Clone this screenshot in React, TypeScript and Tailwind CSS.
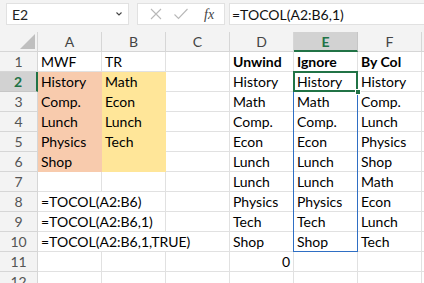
import React from "react";

type Cell = { t: string; bold?: boolean; right?: boolean; fill?: string; span?: number };

const F1 = "bg-[#f8cbad]";
const F2 = "bg-[#ffe699]";

const rows: (Cell | null)[][] = [
  [{ t: "MWF" }, { t: "TR" }, { t: "" }, { t: "Unwind", bold: true }, { t: "Ignore", bold: true }, { t: "By Col", bold: true }],
  [{ t: "History", fill: F1 }, { t: "Math", fill: F2 }, { t: "" }, { t: "History" }, { t: "History" }, { t: "History" }],
  [{ t: "Comp.", fill: F1 }, { t: "Econ", fill: F2 }, { t: "" }, { t: "Math" }, { t: "Math" }, { t: "Comp." }],
  [{ t: "Lunch", fill: F1 }, { t: "Lunch", fill: F2 }, { t: "" }, { t: "Comp." }, { t: "Comp." }, { t: "Lunch" }],
  [{ t: "Physics", fill: F1 }, { t: "Tech", fill: F2 }, { t: "" }, { t: "Econ" }, { t: "Econ" }, { t: "Physics" }],
  [{ t: "Shop", fill: F1 }, { t: "", fill: F2 }, { t: "" }, { t: "Lunch" }, { t: "Lunch" }, { t: "Shop" }],
  [{ t: "" }, { t: "" }, { t: "" }, { t: "Lunch" }, { t: "Lunch" }, { t: "Math" }],
  [{ t: "=TOCOL(A2:B6)", span: 2 }, null, { t: "" }, { t: "Physics" }, { t: "Physics" }, { t: "Econ" }],
  [{ t: "=TOCOL(A2:B6,1)", span: 2 }, null, { t: "" }, { t: "Tech" }, { t: "Tech" }, { t: "Lunch" }],
  [{ t: "=TOCOL(A2:B6,1,TRUE)", span: 3 }, null, null, { t: "Shop" }, { t: "Shop" }, { t: "Tech" }],
  [{ t: "" }, { t: "" }, { t: "" }, { t: "0", right: true }, { t: "" }, { t: "" }],
  [{ t: "" }, { t: "" }, { t: "" }, { t: "" }, { t: "" }, { t: "" }],
];

const cols = ["A", "B", "C", "D", "E", "F"];

export default function App() {
  return (
    <div
      className="w-[424px] h-[283px] overflow-hidden bg-white relative"
      style={{ fontFamily: "Lato, 'Noto Sans', sans-serif" }}
    >
      {/* Formula bar */}
      <div className="h-[32px] bg-[#f3f3f3] flex items-start pt-[3px] pl-[6px]">
        <div className="w-[123px] h-[22px] bg-white border border-[#e1e1e1] flex items-center justify-between pl-[5px] pr-[4px] text-[14px] text-[#222]">
          <span>E2</span>
          <svg width="8" height="6" viewBox="0 0 8 6" className="mr-[1px]">
            <path d="M1.5 1.5 L4 4 L6.5 1.5" stroke="#444" strokeWidth="1.1" fill="none" />
          </svg>
        </div>
        <div className="ml-[8px] w-[88px] h-[22px] bg-white border border-[#e1e1e1] flex items-center">
          <svg width="14" height="14" viewBox="0 0 14 14" className="ml-[11px]">
            <path d="M2 2 L12 12 M12 2 L2 12" stroke="#b8b8b8" strokeWidth="1.1" fill="none" />
          </svg>
          <svg width="16" height="14" viewBox="0 0 16 14" className="ml-[10px]">
            <path d="M1.5 7.5 L5.5 11.5 L14.5 2" stroke="#b8b8b8" strokeWidth="1.1" fill="none" />
          </svg>
          <span
            className="ml-[15px] text-[14px] italic text-[#444]"
            style={{ fontFamily: "'Liberation Serif', 'DejaVu Serif', serif" }}
          >
            fx
          </span>
        </div>
        <div className="ml-[4px] flex-1 h-[22px] bg-white border border-[#e1e1e1] border-r-0 flex items-center pl-[2px] text-[14px] text-[#111]">
          =TOCOL(A2:B6,1)
        </div>
      </div>

      {/* Grid */}
      <div
        className="grid"
        style={{ gridTemplateColumns: "38px repeat(6, 64px) 1fr", gridAutoRows: "20px" }}
      >
        {/* corner */}
        <div className="bg-[#f3f3f3] border-r border-b border-[#d6d6d6] relative">
          <svg width="15" height="15" viewBox="0 0 15 15" className="absolute right-[2px] bottom-[2px]">
            <path d="M15 0 L15 15 L0 15 Z" fill="#bfbfbf" />
          </svg>
        </div>
        {cols.map((c) =>
          c === "E" ? (
            <div
              key={c}
              className="bg-[#d2d2d2] border-r border-[#c6c6c6] border-b-2 border-b-[#217346] flex items-center justify-center text-[14px] font-bold text-[#217346]"
            >
              {c}
            </div>
          ) : (
            <div
              key={c}
              className="bg-[#f3f3f3] border-r border-b border-[#d6d6d6] flex items-center justify-center text-[14px] text-[#444]"
            >
              {c}
            </div>
          )
        )}
        <div className="bg-[#f3f3f3] border-b border-[#d6d6d6]" />

        {rows.map((r, ri) => (
          <React.Fragment key={ri}>
            {ri === 1 ? (
              <div className="bg-[#d2d2d2] border-b border-[#c6c6c6] border-r-2 border-r-[#217346] flex items-center justify-center text-[14px] font-bold text-[#217346]">
                {ri + 1}
              </div>
            ) : (
              <div className="bg-[#f3f3f3] border-r border-b border-[#d6d6d6] flex items-center justify-center text-[14px] text-[#555]">
                {ri + 1}
              </div>
            )}
            {r.map((cell, ci) => {
              if (!cell) return null;
              const span = cell.span ?? 1;
              const border = cell.fill
                ? `${cell.fill} border-r border-b ${cell.fill === F1 ? "border-[#f8cbad]" : "border-[#ffe699]"}`
                : "bg-white border-r border-b border-[#e1e1e1]";
              return (
                <div
                  key={ci}
                  className={`${border} flex items-end pb-[1px] px-[3px] text-[14px] leading-[17px] text-black whitespace-nowrap overflow-visible ${cell.bold ? "font-bold" : ""} ${cell.right ? "justify-end" : ""}`}
                  style={span > 1 ? { gridColumn: `span ${span} / span ${span}` } : undefined}
                >
                  {cell.t}
                </div>
              );
            })}
            <div className="bg-white border-b border-[#e1e1e1]" />
          </React.Fragment>
        ))}
      </div>

      {/* Spill range border E2:E10 */}
      <div className="absolute left-[293px] top-[71px] w-[65px] h-[181px] border border-[#2f6fc4] pointer-events-none" />
      {/* Active cell E2 */}
      <div className="absolute left-[293px] top-[71px] w-[65px] h-[21px] border-2 border-[#217346] pointer-events-none" />
      <div className="absolute left-[355px] top-[89px] w-[6px] h-[6px] bg-[#217346] border border-white pointer-events-none" />
    </div>
  );
}
